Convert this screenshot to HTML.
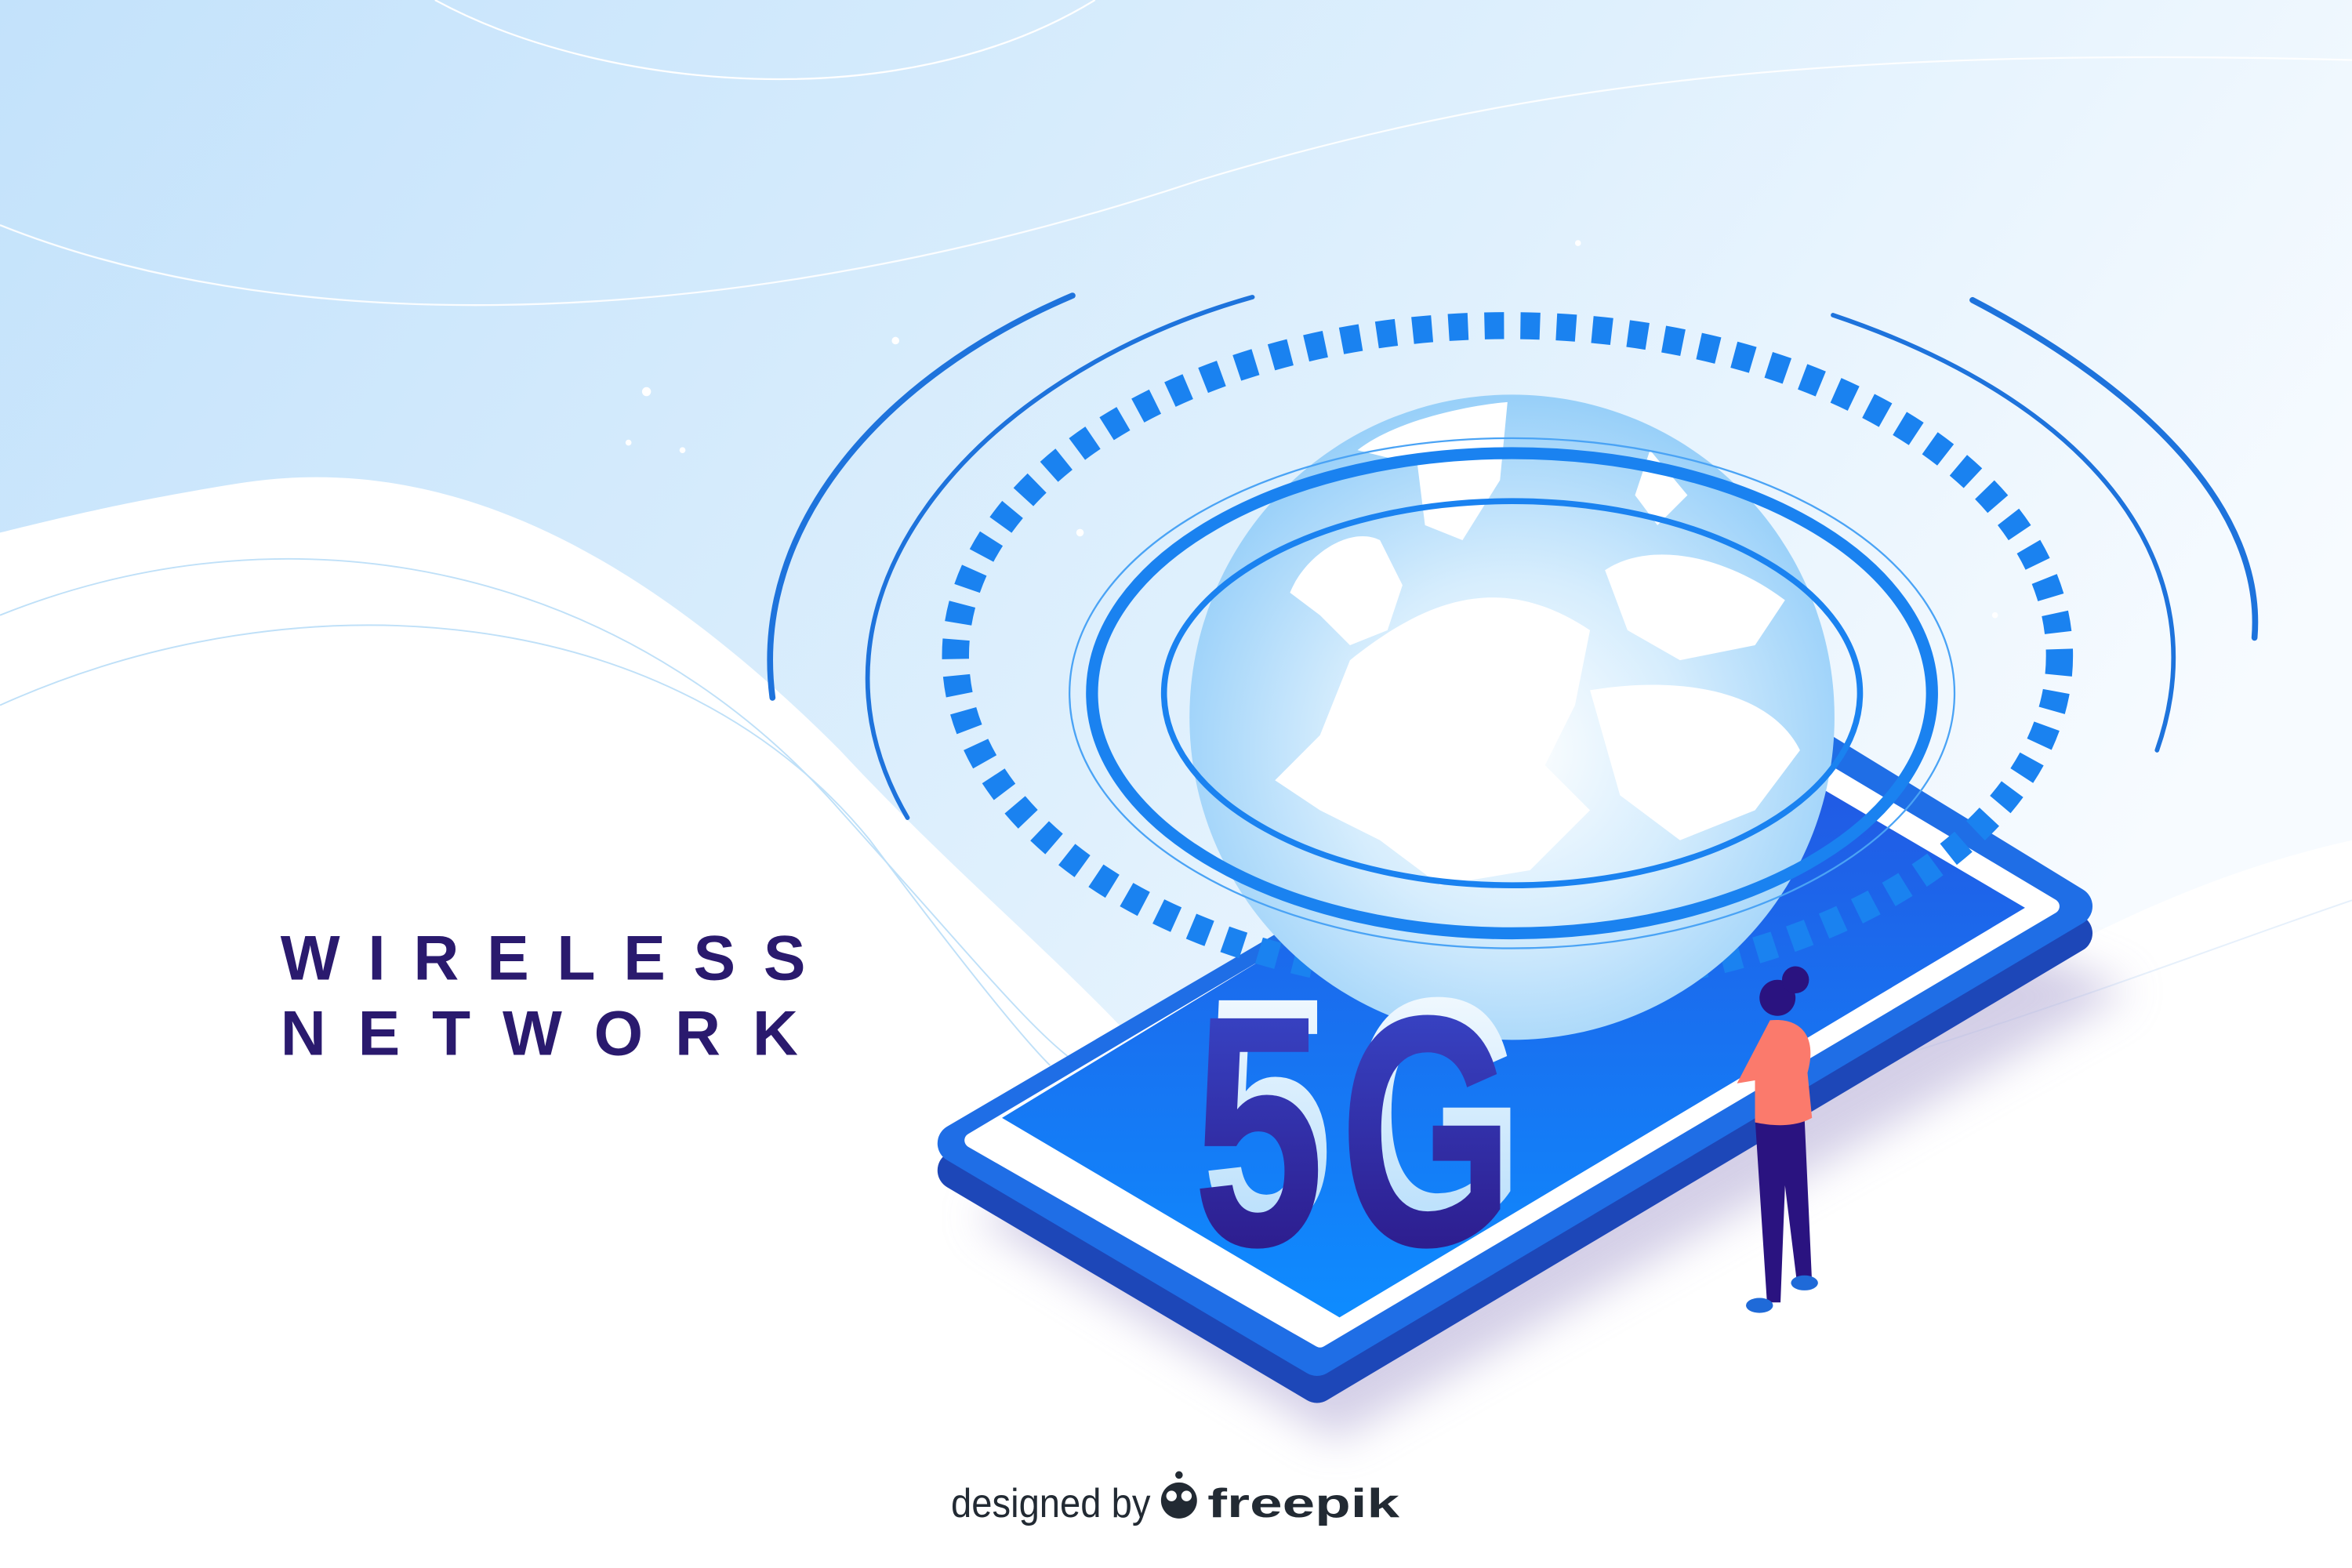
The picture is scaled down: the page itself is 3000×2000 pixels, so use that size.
<!DOCTYPE html>
<html><head><meta charset="utf-8"><style>
html,body{margin:0;padding:0;background:#fff;}
svg{display:block}
</style></head><body>
<svg width="3000" height="2000" viewBox="0 0 1568 1045" preserveAspectRatio="none" xmlns="http://www.w3.org/2000/svg">
<defs>
<linearGradient id="bg" x1="0" y1="0" x2="1" y2="0.4">
<stop offset="0" stop-color="#c3e2fb"/><stop offset="0.6" stop-color="#dff0fd"/><stop offset="1" stop-color="#f7fbff"/>
</linearGradient>
<radialGradient id="glob" cx="0.5" cy="0.55" r="0.6">
<stop offset="0" stop-color="#ffffff"/><stop offset="0.45" stop-color="#d6edfd"/><stop offset="1" stop-color="#8ccaf8"/>
</radialGradient>
<linearGradient id="scr" x1="0" y1="0" x2="0" y2="1">
<stop offset="0" stop-color="#2453e0"/><stop offset="1" stop-color="#0e8cff"/>
</linearGradient>
<linearGradient id="side" x1="0" y1="0" x2="1" y2="1">
<stop offset="0" stop-color="#2a6de6"/><stop offset="1" stop-color="#1d47b8"/>
</linearGradient>
<linearGradient id="dig" x1="0" y1="0" x2="0" y2="1">
<stop offset="0" stop-color="#3a4cd0"/><stop offset="1" stop-color="#2a1380"/>
</linearGradient>
<linearGradient id="digl" x1="0" y1="0" x2="0" y2="1">
<stop offset="0" stop-color="#ffffff"/><stop offset="1" stop-color="#a9d8fb"/>
</linearGradient>
<filter id="blur"><feGaussianBlur stdDeviation="14"/></filter>
</defs>
<rect width="1568" height="1045" fill="#fff"/>
<path d="M0,0 H1568 V560 C1500,575 1440,600 1390,625 L900,905 C800,700 700,650 560,500 C430,370 300,300 160,322 C90,333 40,345 0,355 Z" fill="url(#bg)"/>
<path d="M0,150 C200,230 500,220 800,120 C1000,60 1200,30 1568,40" fill="none" stroke="#fff" stroke-width="1.2" opacity="0.9"/>
<path d="M290,0 C400,60 600,80 730,0" fill="none" stroke="#fff" stroke-width="1.2"/>
<path d="M0,410 C200,330 420,380 560,540 C650,640 690,690 720,710" fill="none" stroke="#bfe0f8" stroke-width="1"/>
<path d="M0,470 C200,380 450,400 580,560 C640,640 680,690 700,710" fill="none" stroke="#bfe0f8" stroke-width="1"/>
<path d="M1050,760 C1250,720 1450,640 1568,600" fill="none" stroke="#e6f0fb" stroke-width="1"/>
<g fill="#fff"><circle cx="431" cy="261" r="3"/><circle cx="419" cy="295" r="2"/><circle cx="455" cy="300" r="2"/><circle cx="597" cy="227" r="2.5"/><circle cx="720" cy="355" r="2.5"/><circle cx="1330" cy="410" r="2"/><circle cx="1052" cy="162" r="2"/></g>
<!-- arcs -->
<g fill="none" stroke="#1e73dc" stroke-linecap="round">
<path d="M715,197 C590,250 500,350 515,465" stroke-width="4"/>
<path d="M835,198 C650,250 520,400 605,545" stroke-width="3"/>
<path d="M1315,200 C1430,260 1510,340 1503,425" stroke-width="4"/>
<path d="M1222,210 C1400,270 1480,380 1438,500" stroke-width="3"/>
</g>
<!-- phone shadow -->
<polygon points="650,810 890,960 1420,660 1200,570" fill="#b8b0d8" opacity="0.6" filter="url(#blur)"/>
<!-- phone body -->
<polygon points="638,780 878,922 1382,622 1150,480" fill="#1d47b8" stroke="#1d47b8" stroke-width="26" stroke-linejoin="round"/>
<polygon points="638,762 878,904 1382,604 1150,462" fill="#1f6ee6" stroke="#1f6ee6" stroke-width="26" stroke-linejoin="round"/>
<polygon points="648,760 880,893 1368,604 1140,468" fill="#fff" stroke="#fff" stroke-width="10" stroke-linejoin="round"/>
<polygon points="668,745 893,878 1350,605 1120,470" fill="url(#scr)"/>
<!-- dashed ring -->
<ellipse cx="1005" cy="437" rx="368" ry="220" fill="none" stroke="#1a82f0" stroke-width="18" stroke-dasharray="13 11"/>
<!-- globe -->
<circle cx="1008" cy="478" r="215" fill="url(#glob)"/>
<g fill="#fff">
<path d="M905,300 C930,280 980,270 1005,268 L1000,320 L975,360 L950,350 L945,310 Z"/>
<path d="M860,395 C870,370 900,350 920,360 L935,390 L925,420 L900,430 L880,410 Z"/>
<path d="M900,440 C950,400 1000,380 1060,420 L1050,470 L1030,510 L1060,540 L1020,580 L960,590 L920,560 L880,540 L850,520 L880,490 Z"/>
<path d="M1070,380 C1100,360 1150,370 1190,400 L1170,430 L1120,440 L1085,420 Z"/>
<path d="M1060,460 C1120,450 1180,460 1200,500 L1170,540 L1120,560 L1080,530 Z"/>
<path d="M1100,300 L1125,330 L1105,350 L1090,330 Z"/>
</g>
<ellipse cx="1008" cy="462" rx="280" ry="160" fill="none" stroke="#1a82f0" stroke-width="8"/>
<ellipse cx="1008" cy="462" rx="232" ry="128" fill="none" stroke="#1a82f0" stroke-width="4"/>
<ellipse cx="1008" cy="462" rx="295" ry="170" fill="none" stroke="#4aa3f5" stroke-width="1.2"/>
<!-- 5G -->
<g font-family="Liberation Sans, sans-serif" font-weight="bold" font-size="220">
<g transform="translate(795,830) scale(0.72,1)">
<text x="8" y="-12" fill="url(#digl)">5</text>
<text x="0" y="0" fill="url(#dig)">5</text>
</g>
<g transform="translate(893,830) scale(0.68,1)">
<text x="10" y="-12" fill="url(#digl)">G</text>
<text x="0" y="0" fill="url(#dig)">G</text>
</g>
</g>
<!-- woman -->
<g>
<path d="M1170,745 L1178,868 L1187,868 L1190,790 L1198,855 L1208,855 L1203,745 Z" fill="#2a1380"/>
<ellipse cx="1173" cy="870" rx="9" ry="5" fill="#1f6ad8"/>
<ellipse cx="1203" cy="855" rx="9" ry="5" fill="#1f6ad8"/>
<path d="M1180,680 C1200,678 1212,690 1205,715 L1208,745 C1195,752 1180,750 1170,748 L1170,720 L1158,722 Z" fill="#fb7a6c"/>
<circle cx="1185" cy="665" r="12" fill="#2a1380"/>
<circle cx="1197" cy="653" r="9" fill="#2a1380"/>
</g>
<!-- text -->
<g font-family="Liberation Sans, sans-serif" font-weight="bold" fill="#2a1a6e" font-size="42">
<text x="187" y="653" textLength="350" lengthAdjust="spacing">WIRELESS</text>
<text x="187" y="703" textLength="345" lengthAdjust="spacing">NETWORK</text>
</g>
<g font-family="Liberation Sans, sans-serif" fill="#222a33">
<text x="634" y="1011" font-size="27" textLength="133" lengthAdjust="spacingAndGlyphs">designed by</text>
<circle cx="786" cy="1000" r="12" fill="#222a33"/>
<circle cx="781" cy="997" r="3.5" fill="#fff"/><circle cx="791" cy="997" r="3.5" fill="#fff"/>
<circle cx="786" cy="983" r="2.5"/>
<text x="805" y="1011" font-size="27" font-weight="bold" textLength="128" lengthAdjust="spacingAndGlyphs">freepik</text>
</g>
</svg>
</body></html>
